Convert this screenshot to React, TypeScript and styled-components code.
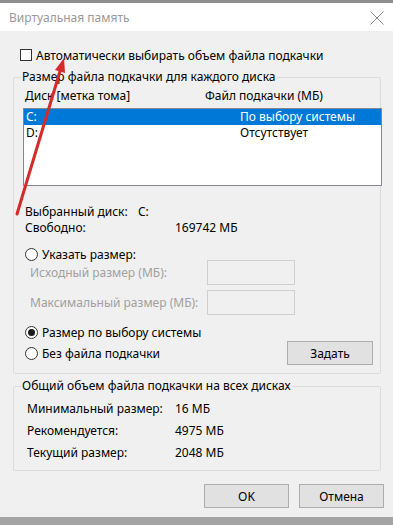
import React from "react";
import styled, { createGlobalStyle } from "styled-components";

const GlobalStyle = createGlobalStyle`
  html, body {
    margin: 0;
    padding: 0;
    background: #f0f0f0;
  }
  body {
    font-family: "Noto Sans", "Open Sans", sans-serif;
    font-size: 12px;
    color: #000;
  }
  * {
    box-sizing: border-box;
  }
`;

const Window = styled.div`
  position: relative;
  width: 393px;
  height: 525px;
  display: flex;
  flex-direction: column;
  overflow: hidden;
`;

const TopEdge = styled.div`
  height: 3px;
  background: #8e8e8e;
`;

const TitleBar = styled.div`
  height: 28px;
  background: #fff;
  display: flex;
  align-items: center;
  justify-content: space-between;
  padding: 1px 9px 0 9px;
`;

const Title = styled.span`
  color: #9a9a9a;
  font-size: 12px;
`;

const Body = styled.div`
  flex: 1;
  background: #f0f0f0;
  display: flex;
  flex-direction: column;
  padding: 16px 9px 6px 0;
`;

const BottomEdge = styled.div`
  height: 8px;
  background: #a4a4a4;
`;

const CheckRow = styled.label`
  display: flex;
  align-items: center;
  gap: 4px;
  height: 16px;
  margin-left: 20px;
`;

const CheckBox = styled.span`
  width: 12px;
  height: 12px;
  border: 1px solid #333;
  background: #fff;
`;

const Group = styled.fieldset<{ $top: number }>`
  margin: ${(p) => p.$top}px 0 0 13px;
  width: 368px;
  padding: 0;
  border: 1px solid #dcdcdc;
  border-radius: 2px;
  min-width: 0;
`;

const Legend = styled.legend`
  margin-left: 7px;
  padding: 0 1px;
  line-height: 16px;
`;

const Columns = styled.div<{ $first: number; $left: number }>`
  display: grid;
  grid-template-columns: ${(p) => p.$first}px 1fr;
  align-items: center;
  padding-left: ${(p) => p.$left}px;
  line-height: 16px;
`;

const Header = styled(Columns)`
  margin-top: 3px;
`;

const ListBox = styled.div`
  margin: 4px -2px 0 9px;
  height: 78px;
  background: #fff;
  border: 1px solid #828790;
`;

const ListItem = styled(Columns)<{ $selected?: boolean }>`
  line-height: 16px;
  height: 16px;
  background: ${(p) => (p.$selected ? "#0078d7" : "transparent")};
  color: ${(p) => (p.$selected ? "#fff" : "#000")};
`;

const InfoBlock = styled.div`
  margin-top: 18px;
`;

const RadioRow = styled.label<{ $top: number }>`
  display: flex;
  align-items: center;
  gap: 4px;
  height: 14px;
  margin: ${(p) => p.$top}px 0 0 11px;
`;

const Radio = styled.span<{ $checked?: boolean }>`
  position: relative;
  width: 13px;
  height: 13px;
  border: 1px solid #333;
  border-radius: 50%;
  background: #fff;
  flex: none;
  &::after {
    content: "";
    display: ${(p) => (p.$checked ? "block" : "none")};
    position: absolute;
    left: 2px;
    top: 2px;
    width: 7px;
    height: 7px;
    border-radius: 50%;
    background: #1a1a1a;
  }
`;

const SizeGrid = styled.div`
  margin-top: -1px;
  display: grid;
  grid-template-columns: 177px 88px;
  grid-auto-rows: 25px;
  row-gap: 5px;
  align-items: center;
  padding-left: 16px;
  color: #a0a0a0;
`;

const TextBox = styled.div`
  height: 25px;
  border: 1px solid #cfcfcf;
  background: #f0f0f0;
`;

const LastRow = styled.div`
  display: flex;
  align-items: center;
  justify-content: space-between;
  margin: 2px 7px 8px 0;
  height: 24px;
`;

const Button = styled.button<{ $width: number }>`
  width: ${(p) => p.$width}px;
  height: 24px;
  padding: 0;
  font: inherit;
  color: #000;
  background: #e1e1e1;
  border: 1px solid #adadad;
`;

const Totals = styled.div`
  padding: 4px 0 6px 0;
`;

const TotalRow = styled(Columns)`
  height: 22px;
`;

const Footer = styled.div`
  display: flex;
  justify-content: flex-end;
  gap: 10px;
  margin-top: 13px;
`;

const Overlay = styled.svg`
  position: absolute;
  left: 0;
  top: 0;
  pointer-events: none;
`;

function CloseIcon() {
  return (
    <svg width="14" height="14" viewBox="0 0 14 14">
      <path d="M0.5 0.5 L13.5 13.5 M13.5 0.5 L0.5 13.5" stroke="#8a8a8a" strokeWidth="1" />
    </svg>
  );
}

export default function App() {
  return (
    <Window>
      <GlobalStyle />
      <TopEdge />
      <TitleBar>
        <Title>Виртуальная память</Title>
        <CloseIcon />
      </TitleBar>
      <Body>
        <CheckRow>
          <CheckBox />
          Автоматически выбирать объем файла подкачки
        </CheckRow>

        <Group $top={6}>
          <Legend>Размер файла подкачки для каждого диска</Legend>
          <Header $first={180} $left={11}>
            <span>Диск [метка тома]</span>
            <span>Файл подкачки (МБ)</span>
          </Header>
          <ListBox>
            <ListItem $first={214} $left={2} $selected>
              <span>C:</span>
              <span>По выбору системы</span>
            </ListItem>
            <ListItem $first={214} $left={2}>
              <span>D:</span>
              <span>Отсутствует</span>
            </ListItem>
          </ListBox>

          <InfoBlock>
            <Columns $first={113} $left={11}>
              <span>Выбранный диск:</span>
              <span>C:</span>
            </Columns>
            <Columns $first={150} $left={11}>
              <span>Свободно:</span>
              <span>169742 МБ</span>
            </Columns>
          </InfoBlock>

          <RadioRow $top={11}>
            <Radio />
            Указать размер:
          </RadioRow>
          <SizeGrid>
            <span>Исходный размер (МБ):</span>
            <TextBox />
            <span>Максимальный размер (МБ):</span>
            <TextBox />
          </SizeGrid>

          <RadioRow $top={10}>
            <Radio $checked />
            Размер по выбору системы
          </RadioRow>
          <LastRow>
            <RadioRow $top={0}>
              <Radio />
              Без файла подкачки
            </RadioRow>
            <Button $width={86}>Задать</Button>
          </LastRow>
        </Group>

        <Group $top={4}>
          <Legend>Общий объем файла подкачки на всех дисках</Legend>
          <Totals>
            <TotalRow $first={148} $left={13}>
              <span>Минимальный размер:</span>
              <span>16 МБ</span>
            </TotalRow>
            <TotalRow $first={148} $left={13}>
              <span>Рекомендуется:</span>
              <span>4975 МБ</span>
            </TotalRow>
            <TotalRow $first={148} $left={13}>
              <span>Текущий размер:</span>
              <span>2048 МБ</span>
            </TotalRow>
          </Totals>
        </Group>

        <Footer>
          <Button $width={85}>OK</Button>
          <Button $width={85}>Отмена</Button>
        </Footer>
      </Body>
      <BottomEdge />

      <Overlay width="393" height="525" viewBox="0 0 393 525">
        <line x1="17" y1="214" x2="61" y2="68" stroke="#d42a2a" strokeWidth="3" strokeLinecap="round" />
        <polygon points="64,58 65,73 55,70" fill="#d42a2a" />
      </Overlay>
    </Window>
  );
}
